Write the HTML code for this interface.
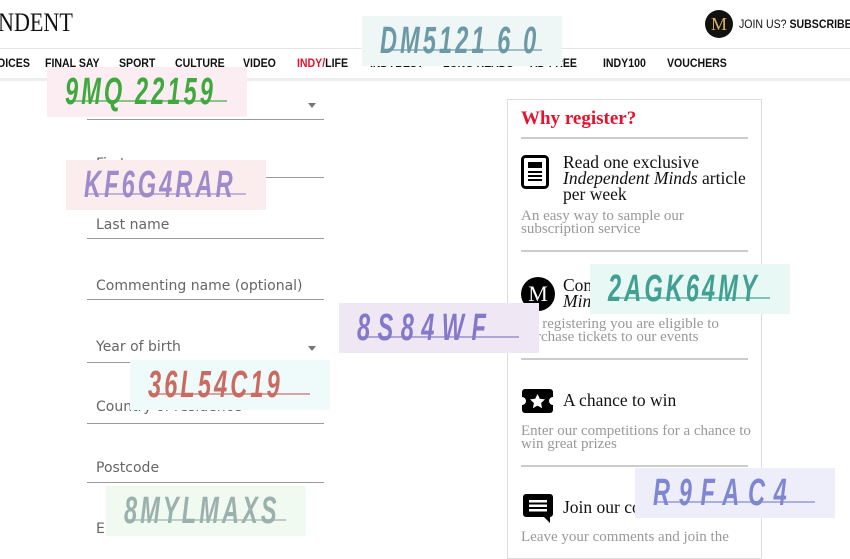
<!DOCTYPE html>
<html><head><meta charset="utf-8"><style>
*{margin:0;padding:0;box-sizing:border-box}
body{width:850px;height:540px;overflow:hidden;background:#fff;position:relative;font-family:"Liberation Sans",sans-serif}
.a{position:absolute;white-space:nowrap}
.nav{font-weight:bold;font-size:12px;color:#111;top:56px;transform:scaleX(0.88);transform-origin:left}
.lbl{font-family:"DejaVu Sans",sans-serif;font-size:14px;color:#666;left:96px}
.ul{left:87px;width:237px;height:1px;background:#9a9a9a}
.hr{left:521px;width:227px;height:2px;background:#ccc}
.serif{font-family:"Liberation Serif",serif}
.t{font-size:17.5px;color:#111;line-height:16px}
.s{font-size:15px;color:#999;line-height:13px}
.cap{position:absolute;width:200px;height:50px;overflow:hidden}
.cap span{position:absolute;left:18px;top:2px;font-family:"Liberation Sans",sans-serif;font-weight:bold;font-size:38px;font-style:italic;letter-spacing:5px;line-height:46px;transform:scaleX(0.62);transform-origin:left;white-space:nowrap}
.cap:after{content:"";position:absolute;left:20px;right:20px;top:33px;height:2px;background:currentColor;opacity:.6}
</style></head><body>
<div class="a serif" style="left:-2px;top:8px;font-size:26px;color:#111;transform:scaleX(0.85);transform-origin:left">NDENT</div>
<div class="a" style="left:705px;top:10px;width:28px;height:28px;border-radius:50%;background:#111;color:#d9b15a;font-family:'Liberation Serif',serif;font-size:18px;text-align:center;line-height:28px">M</div>
<div class="a" style="left:739px;top:17px;font-size:12px;color:#111;transform:scaleX(0.88);transform-origin:left">JOIN US? <b>SUBSCRIBE</b></div>
<div class="a" style="left:0;top:48px;width:850px;height:1px;background:#e4e4e4"></div>
<div class="a" style="left:0;top:78px;width:850px;height:3px;background:#eee"></div>
<div class="a nav" style="left:-3px">OICES</div>
<div class="a nav" style="left:45px">FINAL SAY</div>
<div class="a nav" style="left:119px">SPORT</div>
<div class="a nav" style="left:175px">CULTURE</div>
<div class="a nav" style="left:243px">VIDEO</div>
<div class="a nav" style="left:297px"><span style="color:#e8112d">INDY/</span>LIFE</div>
<div class="a nav" style="left:370px">INDYBEST</div>
<div class="a nav" style="left:443px">LONG READS</div>
<div class="a nav" style="left:530px">AD-FREE</div>
<div class="a nav" style="left:603px">INDY100</div>
<div class="a nav" style="left:667px">VOUCHERS</div>

<div class="a" style="left:308px;top:103px;border:4px solid transparent;border-top:5px solid #777"></div>
<div class="a ul" style="top:119px"></div>
<div class="a lbl" style="top:156px">First name</div>
<div class="a ul" style="top:177px"></div>
<div class="a lbl" style="top:217px">Last name</div>
<div class="a ul" style="top:238px"></div>
<div class="a lbl" style="top:278px">Commenting name (optional)</div>
<div class="a ul" style="top:299px"></div>
<div class="a lbl" style="top:339px">Year of birth</div>
<div class="a" style="left:308px;top:346px;border:4px solid transparent;border-top:5px solid #777"></div>
<div class="a ul" style="top:362px"></div>
<div class="a lbl" style="top:399px">Country of residence</div>
<div class="a ul" style="top:423px"></div>
<div class="a lbl" style="top:460px">Postcode</div>
<div class="a ul" style="top:482px"></div>
<div class="a lbl" style="top:521px">Email</div>

<div class="a" style="left:507px;top:99px;width:255px;height:460px;border:1px solid #ddd"></div>
<div class="a serif" style="left:521px;top:108px;font-size:19px;font-weight:bold;color:#e8112d">Why register?</div>
<div class="a hr" style="top:137px"></div>
<svg class="a" style="left:521px;top:155px" width="28" height="34" viewBox="0 0 28 34"><rect x="1.5" y="1.5" width="25" height="31" rx="3" fill="none" stroke="#000" stroke-width="3"/><rect x="7" y="7" width="14" height="6" fill="#000"/><rect x="7" y="16" width="14" height="2" fill="#000"/><rect x="7" y="20" width="14" height="2" fill="#000"/><rect x="7" y="24" width="14" height="2" fill="#000"/></svg>
<div class="a serif t" style="left:563px;top:154px">Read one exclusive<br><i>Independent Minds</i> article<br>per week</div>
<div class="a serif s" style="left:521px;top:210px">An easy way to sample our<br>subscription service</div>
<div class="a hr" style="top:250px"></div>
<div class="a" style="left:521px;top:277px;width:34px;height:34px;border-radius:50%;background:#000;color:#fff;font-family:'Liberation Serif',serif;font-size:22px;text-align:center;line-height:34px">M</div>
<div class="a serif t" style="left:563px;top:277px">Comments and <br><i>Minds</i></div>
<div class="a serif s" style="left:521px;top:318px">By registering you are eligible to<br>purchase tickets to our events</div>
<div class="a hr" style="top:358px"></div>
<svg class="a" style="left:522px;top:389px" width="31" height="24" viewBox="0 0 31 24"><path d="M3 0H28a3 3 0 0 1 3 3V8a4 4 0 0 0 0 8v5a3 3 0 0 1-3 3H3a3 3 0 0 1-3-3V16a4 4 0 0 0 0-8V3a3 3 0 0 1 3-3z" fill="#000"/><path d="M15.5 5l2.3 4.8 5.2.6-3.9 3.6 1 5.2-4.6-2.6-4.6 2.6 1-5.2-3.9-3.6 5.2-.6z" fill="#fff"/></svg>
<div class="a serif t" style="left:563px;top:392px">A chance to win</div>
<div class="a serif s" style="left:521px;top:425px">Enter our competitions for a chance to<br>win great prizes</div>
<div class="a hr" style="top:465px"></div>
<svg class="a" style="left:523px;top:494px" width="30" height="29" viewBox="0 0 30 29"><path d="M3 0H27a3 3 0 0 1 3 3V20a3 3 0 0 1-3 3H27v6l-6-6H3a3 3 0 0 1-3-3V3a3 3 0 0 1 3-3z" fill="#000"/><rect x="6" y="6" width="18" height="2.5" fill="#fff"/><rect x="6" y="10.5" width="18" height="2.5" fill="#fff"/><rect x="6" y="15" width="18" height="2.5" fill="#fff"/></svg>
<div class="a serif t" style="left:563px;top:499px">Join our conversation</div>
<div class="a serif s" style="left:521px;top:531px">Leave your comments and join the</div>

<div class="cap" style="left:362px;top:16px;background:#eff6f6;color:#6b9aa6"><span>DM5121 6 0</span></div>
<div class="cap" style="left:47px;top:67px;background:#fcedf2;color:#3fa93f"><span>9MQ 22159</span></div>
<div class="cap" style="left:66px;top:160px;background:#fbeded;color:#9f8acb"><span>KF6G4RAR</span></div>
<div class="cap" style="left:339px;top:303px;background:#efe7f4;color:#8479c9"><span style="letter-spacing:12px">8S84WF</span></div>
<div class="cap" style="left:590px;top:264px;background:#e8f8f5;color:#40a091"><span>2AGK64MY</span></div>
<div class="cap" style="left:130px;top:360px;background:#effafa;color:#c96b60"><span>36L54C19</span></div>
<div class="cap" style="left:106px;top:486px;background:#f0faf0;color:#9bb1ae"><span>8MYLMAXS</span></div>
<div class="cap" style="left:635px;top:468px;background:#eeeefb;color:#8087d1"><span style="letter-spacing:14px">R9FAC4</span></div>
</body></html>
